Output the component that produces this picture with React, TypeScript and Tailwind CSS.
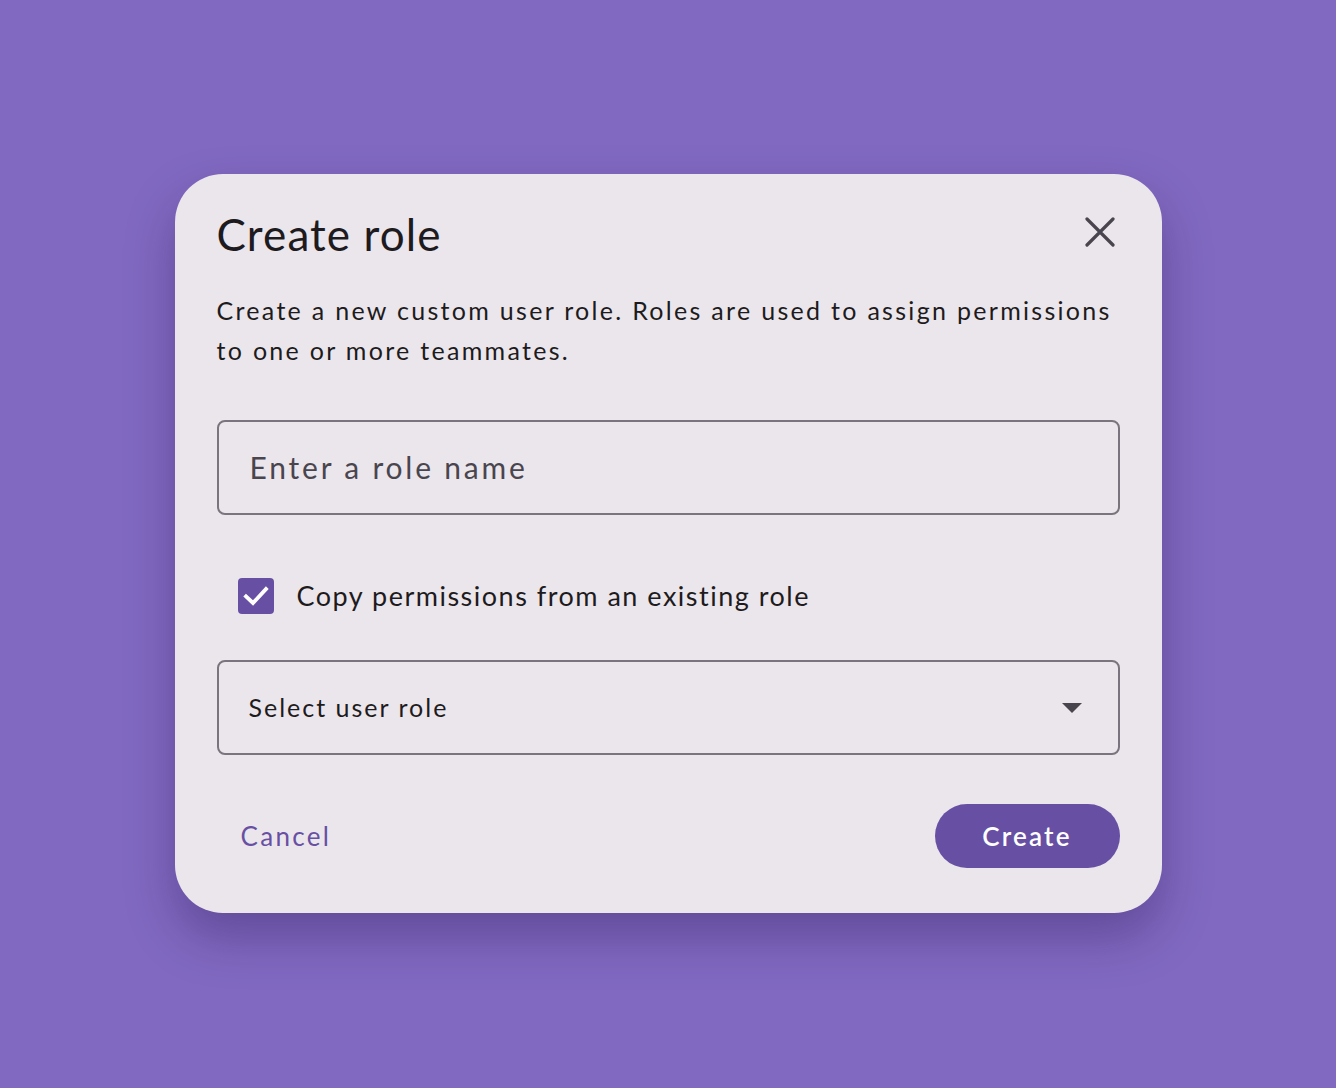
import React from "react";

export default function App() {
  return (
    <div
      className="w-[1336px] h-[1088px] bg-[#8169c1] flex items-start justify-center pt-[174px]"
      style={{ fontFamily: "Lato, 'Open Sans', sans-serif" }}
    >
      <div className="w-[987px] h-[739px] bg-[#ebe6eb] rounded-[48px] shadow-[0_24px_48px_rgba(40,20,80,0.35)] px-[42px] pt-[34px] flex flex-col">
        <div className="flex items-center justify-between h-[52px]">
          <h1 className="text-[44px] leading-none text-[#1d1b20] tracking-[1.1px]">Create role</h1>
          <button className="w-[44px] h-[44px] flex items-center justify-center -mr-[2px] -mt-[4px]">
            <svg width="30" height="30" viewBox="0 0 30 30">
              <path d="M2 2 L28 28 M28 2 L2 28" stroke="#49454f" strokeWidth="3.2" strokeLinecap="round" />
            </svg>
          </button>
        </div>
        <p className="mt-[30px] text-[25px] leading-[40px] text-[#1d1b20] tracking-[2.3px]">
          Create a new custom user role. Roles are used to assign permissions to one or more teammates.
        </p>
        <div className="mt-[50px] h-[95px] border-2 border-[#79747e] rounded-[8px] flex items-center px-[31px]">
          <span className="text-[30px] text-[#49454f] tracking-[2.8px]">Enter a role name</span>
        </div>
        <div className="mt-[63px] flex items-center pl-[21px] h-[36px]">
          <div className="w-[36px] h-[36px] rounded-[4px] bg-[#6750a4] flex items-center justify-center">
            <svg width="28" height="28" viewBox="0 0 28 28">
              <path d="M4 14.5 L11 21 L24 7" stroke="white" strokeWidth="3.8" fill="none" strokeLinecap="square" />
            </svg>
          </div>
          <span className="ml-[23px] text-[27px] text-[#1d1b20] tracking-[1.5px]">Copy permissions from an existing role</span>
        </div>
        <div className="mt-[46px] h-[95px] border-2 border-[#79747e] rounded-[8px] flex items-center justify-between pl-[30px] pr-[36px]">
          <span className="text-[25px] text-[#1d1b20] tracking-[2px]">Select user role</span>
          <svg width="20" height="10" viewBox="0 0 20 10">
            <path d="M0 0 L20 0 L10 10 Z" fill="#49454f" />
          </svg>
        </div>
        <div className="mt-[49px] flex items-center justify-between">
          <button className="h-[64px] px-[24px] text-[26px] text-[#6750a4] tracking-[2.3px]">Cancel</button>
          <button className="h-[64px] w-[185px] rounded-full bg-[#6750a4] text-white text-[26px] font-semibold tracking-[2.2px]">
            Create
          </button>
        </div>
      </div>
    </div>
  );
}
